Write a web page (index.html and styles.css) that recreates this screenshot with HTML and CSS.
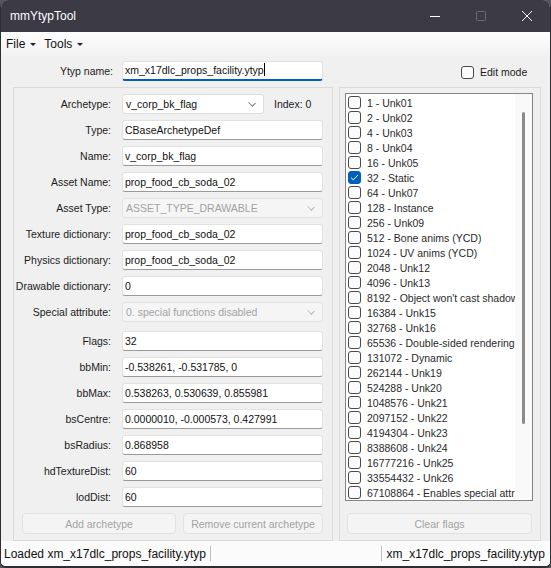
FILE: index.html
```html
<!DOCTYPE html>
<html lang="en">
<head>
    <meta charset="UTF-8">
    <title>mmYtypTool</title>
    <link rel="stylesheet" href="styles.css">
</head>
<body>
<div class="window">
    <div class="titlebar">
        <span class="title">mmYtypTool</span>
        <div class="caption-btns">
            <span class="cap-btn"><svg width="10" height="10" viewBox="0 0 10 10"><path d="M0 5.5h10" stroke="#fff" stroke-width="1"/></svg></span>
            <span class="cap-btn"><svg width="10" height="10" viewBox="0 0 10 10"><rect x="0.5" y="0.5" width="9" height="9" rx="1" fill="none" stroke="#6c6b74" stroke-width="1"/></svg></span>
            <span class="cap-btn"><svg width="10" height="10" viewBox="0 0 10 10"><path d="M0 0L10 10M10 0L0 10" stroke="#fff" stroke-width="1"/></svg></span>
        </div>
    </div>

    <div class="menubar">
        <span class="menu-item">File <i class="drop"></i></span>
        <span class="menu-item">Tools <i class="drop"></i></span>
    </div>

    <div class="content">
        <div class="top-row">
            <label class="top-label">Ytyp name:</label>
            <div class="field focused">xm_x17dlc_props_facility.ytyp<span class="caret"></span></div>
            <div class="edit-mode">
                <span class="check"></span>
                <span>Edit mode</span>
            </div>
        </div>

        <div class="panels">
            <div class="panel left-panel">
                <div class="row">
                    <label>Archetype:</label>
                    <div class="combo short">v_corp_bk_flag<i class="chev"></i></div>
                    <span class="index">Index: 0</span>
                </div>
                <div class="row"><label>Type:</label><div class="field">CBaseArchetypeDef</div></div>
                <div class="row"><label>Name:</label><div class="field">v_corp_bk_flag</div></div>
                <div class="row"><label>Asset Name:</label><div class="field">prop_food_cb_soda_02</div></div>
                <div class="row">
                    <label>Asset Type:</label>
                    <div class="combo disabled">ASSET_TYPE_DRAWABLE<i class="chev"></i></div>
                </div>
                <div class="row"><label>Texture dictionary:</label><div class="field">prop_food_cb_soda_02</div></div>
                <div class="row"><label>Physics dictionary:</label><div class="field">prop_food_cb_soda_02</div></div>
                <div class="row"><label>Drawable dictionary:</label><div class="field">0</div></div>
                <div class="row special">
                    <label>Special attribute:</label>
                    <div class="combo disabled">0. special functions disabled<i class="chev"></i></div>
                </div>
                <div class="row"><label>Flags:</label><div class="field">32</div></div>
                <div class="row"><label>bbMin:</label><div class="field">-0.538261, -0.531785, 0</div></div>
                <div class="row"><label>bbMax:</label><div class="field">0.538263, 0.530639, 0.855981</div></div>
                <div class="row"><label>bsCentre:</label><div class="field">0.0000010, -0.000573, 0.427991</div></div>
                <div class="row"><label>bsRadius:</label><div class="field">0.868958</div></div>
                <div class="row"><label>hdTextureDist:</label><div class="field">60</div></div>
                <div class="row"><label>lodDist:</label><div class="field">60</div></div>
                <div class="btn-row">
                    <button class="btn add-btn" disabled>Add archetype</button>
                    <button class="btn remove-btn" disabled>Remove current archetype</button>
                </div>
            </div>

            <div class="panel right-panel">
                <div class="flag-list">
                    <ul class="flags">
                        <li><span class="check"></span>1 - Unk01</li>
                        <li><span class="check"></span>2 - Unk02</li>
                        <li><span class="check"></span>4 - Unk03</li>
                        <li><span class="check"></span>8 - Unk04</li>
                        <li><span class="check"></span>16 - Unk05</li>
                        <li><span class="check checked"><svg width="9" height="7" viewBox="0 0 9 7"><path d="M1 3.6L3.3 5.8L8 1" fill="none" stroke="#fff" stroke-width="1"/></svg></span>32 - Static</li>
                        <li><span class="check"></span>64 - Unk07</li>
                        <li><span class="check"></span>128 - Instance</li>
                        <li><span class="check"></span>256 - Unk09</li>
                        <li><span class="check"></span>512 - Bone anims (YCD)</li>
                        <li><span class="check"></span>1024 - UV anims (YCD)</li>
                        <li><span class="check"></span>2048 - Unk12</li>
                        <li><span class="check"></span>4096 - Unk13</li>
                        <li><span class="check"></span>8192 - Object won't cast shadow</li>
                        <li><span class="check"></span>16384 - Unk15</li>
                        <li><span class="check"></span>32768 - Unk16</li>
                        <li><span class="check"></span>65536 - Double-sided rendering</li>
                        <li><span class="check"></span>131072 - Dynamic</li>
                        <li><span class="check"></span>262144 - Unk19</li>
                        <li><span class="check"></span>524288 - Unk20</li>
                        <li><span class="check"></span>1048576 - Unk21</li>
                        <li><span class="check"></span>2097152 - Unk22</li>
                        <li><span class="check"></span>4194304 - Unk23</li>
                        <li><span class="check"></span>8388608 - Unk24</li>
                        <li><span class="check"></span>16777216 - Unk25</li>
                        <li><span class="check"></span>33554432 - Unk26</li>
                        <li><span class="check"></span>67108864 - Enables special attributes</li>
                    </ul>
                    <div class="scroll-track"><span class="scroll-thumb"></span></div>
                </div>
                <button class="btn clear-btn" disabled>Clear flags</button>
            </div>
        </div>
    </div>

    <div class="statusbar">
        <span class="status-left">Loaded xm_x17dlc_props_facility.ytyp</span>
        <span class="status-sep"></span>
        <span class="status-fill"></span>
        <span class="status-sep"></span>
        <span class="status-right">xm_x17dlc_props_facility.ytyp</span>
    </div>
</div>
</body>
</html>
```
FILE: styles.css
```css
*{
    margin: 0;
    padding: 0;
    box-sizing: border-box;
}
html,body{
    width: 551px;
    height: 568px;
    overflow: hidden;
    background: #56555c;
}
body{
    font-family: "Liberation Sans", Arial, sans-serif;
    font-size: 10.5px;
    color: #1b1b1b;
}
.window{
    width: 551px;
    height: 568px;
    display: flex;
    flex-direction: column;
    background: #f0f0f0;
    border: 1px solid #2e2d33;
    border-top: none;
    border-bottom-width: 2px;
    border-radius: 8px 8px 6px 6px;
    overflow: hidden;
}
.titlebar{
    height: 32px;
    flex: none;
    display: flex;
    align-items: center;
    background: #3b3a45;
    color: #fff;
}
.title{
    font-size: 12px;
    padding-left: 9px;
    padding-bottom: 1px;
}
.caption-btns{
    margin-left: auto;
    display: flex;
    height: 100%;
}
.cap-btn{
    width: 46px;
    display: flex;
    align-items: center;
    justify-content: center;
}
.menubar{
    height: 24px;
    flex: none;
    display: flex;
    align-items: center;
    padding-left: 5px;
    font-size: 12px;
    color: #111;
    background: linear-gradient(to bottom, #fefefe, #f2f2f2);
}
.menu-item{
    display: flex;
    align-items: center;
    margin-right: 8px;
    padding-bottom: 1px;
}
.drop{
    display: inline-block;
    margin-left: 5px;
    margin-top: 1px;
    border-left: 3px solid transparent;
    border-right: 3px solid transparent;
    border-top: 3px solid #222;
}
.content{
    flex: 1;
    padding: 5px 0 0 12px;
}
.top-row{
    height: 20px;
    display: flex;
    align-items: center;
}
.top-label{
    width: 100px;
    text-align: right;
    margin-right: 9px;
}
.field{
    width: 201px;
    height: 20px;
    line-height: 18px;
    padding-left: 2px;
    background: #fff;
    border: 1px solid #e1e1e1;
    border-bottom-color: #9a9a9a;
    border-radius: 3px;
    white-space: nowrap;
    overflow: hidden;
    color: #111;
}
.field.focused{
    border-bottom: 2px solid #005fb8;
    line-height: 17px;
}
.caret{
    display: inline-block;
    width: 1px;
    height: 13px;
    background: #000;
    vertical-align: -2px;
}
.edit-mode{
    display: flex;
    align-items: center;
    margin-left: 138px;
    padding-top: 2px;
}
.edit-mode .check{
    margin-right: 6px;
}
.check{
    width: 13px;
    height: 13px;
    flex: none;
    border: 1px solid #4a4a4a;
    border-radius: 3px;
    background: #fbfbfb;
    display: inline-flex;
    align-items: center;
    justify-content: center;
}
.check.checked{
    background: #005fb8;
    border-color: #005fb8;
}
.panels{
    display: flex;
    margin-top: 6px;
    height: 454px;
}
.panel{
    border: 1px solid #dadada;
    height: 100%;
}
.left-panel{
    width: 320px;
    padding-top: 6px;
}
.right-panel{
    width: 202px;
    margin-left: 6px;
    padding: 5px 0 0 5px;
}
.row{
    height: 20px;
    margin-bottom: 6px;
    display: flex;
    align-items: center;
}
.row.special{
    margin-bottom: 9px;
}
.row label{
    width: 97px;
    margin-right: 11px;
    text-align: right;
    white-space: nowrap;
}
.combo{
    width: 201px;
    height: 20px;
    line-height: 18px;
    padding-left: 3px;
    background: #fff;
    border: 1px solid #dcdcdc;
    border-radius: 3px;
    display: flex;
    white-space: nowrap;
    color: #111;
}
.combo.short{
    width: 142px;
}
.combo.disabled{
    background: #f5f5f5;
    border-color: #e3e3e3;
    color: #a2a2a2;
}
.chev{
    margin-left: auto;
    margin-right: 8px;
    margin-top: 5px;
    width: 6px;
    height: 6px;
    border-right: 1px solid #6a6a6a;
    border-bottom: 1px solid #6a6a6a;
    transform: rotate(45deg) scaleY(0.8);
}
.combo.disabled .chev{
    border-color: #b4b4b4;
}
.index{
    margin-left: 10px;
}
.btn-row{
    display: flex;
    padding-left: 8px;
    margin-top: 0;
}
.btn{
    height: 21px;
    font-family: "Liberation Sans", Arial, sans-serif;
    font-size: 10.5px;
    color: #a3a3a3;
    background: #f4f4f4;
    border: 1px solid #e2e2e2;
    border-radius: 4px;
}
.add-btn{
    width: 154px;
}
.remove-btn{
    width: 140px;
    margin-left: 7px;
}
.flag-list{
    width: 188px;
    height: 408px;
    border: 1px solid #858585;
    background: #fff;
    display: flex;
}
.flags{
    list-style: none;
    width: 169px;
    overflow: hidden;
    padding-top: 1px;
}
.flags li{
    height: 15px;
    display: flex;
    align-items: center;
    padding-left: 2px;
    white-space: nowrap;
    color: #2a2a2a;
}
.flags .check{
    margin-right: 6px;
}
.scroll-track{
    width: 17px;
    background: #f9f9f9;
    display: flex;
    justify-content: center;
    padding-top: 18px;
}
.scroll-thumb{
    width: 3px;
    height: 312px;
    border-radius: 2px;
    background: #8a8a8a;
}
.clear-btn{
    width: 185px;
    margin: 12px 0 0 2px;
}
.statusbar{
    height: 25px;
    flex: none;
    display: flex;
    align-items: center;
    background: #fbfbfb;
    font-size: 12px;
    color: #111;
}
.status-left{
    padding-left: 3px;
    width: 209px;
}
.status-sep{
    width: 1px;
    height: 15px;
    background: #bdbdbd;
}
.status-fill{
    flex: 1;
}
.status-right{
    padding-left: 4px;
    padding-right: 5px;
}
```
